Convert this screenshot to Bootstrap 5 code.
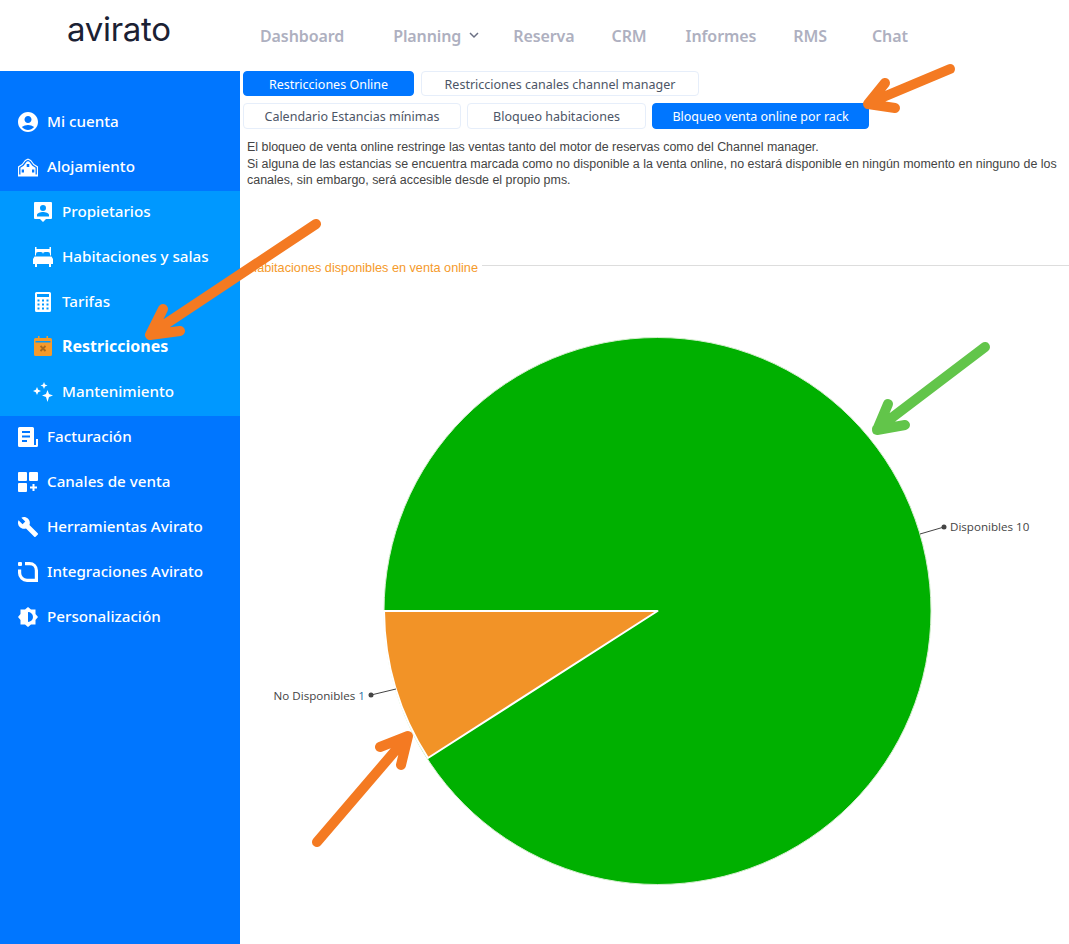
<!DOCTYPE html>
<html lang="es">
<head>
    <meta charset="utf-8">
    <title>Avirato - Restricciones</title>
    <link href="https://cdn.jsdelivr.net/npm/bootstrap@5.3.0/dist/css/bootstrap.min.css" rel="stylesheet">
    <style>
        html, body { height: 944px; overflow: hidden; }
        body { font-family: "Noto Sans", "Open Sans", sans-serif; background: #fff; position: relative; }
        .top-bar { height: 71px; }
        .logo-box { width: 240px; }
        .logo-word { font-family: Inter, sans-serif; font-size: 33px; font-weight: 400; color: #1b2133; letter-spacing: -.3px; line-height: 1; margin-left: 67px; margin-top: -12px; }
        .top-link { font-size: 16px; font-weight: 600; color: #aeb0c0; text-decoration: none; letter-spacing: -.1px; }
        .side-bar { width: 240px; height: 873px; background: #0076ff; padding-top: 30px; flex: none; }
        .side-item { height: 41px; margin-bottom: 4px; padding-left: 18px; gap: 9px; color: #fff; font-size: 15.2px; font-weight: 500; text-decoration: none; }
        .side-item svg { width: 20px; height: 20px; flex: none; }
        .side-sub { background: #0098ff; display: flow-root; }
        .side-sub .side-item { padding-left: 33px; }
        .side-sub .is-on { font-weight: 700; font-size: 16px; position: relative; top: -1px; }
        .main-area { width: 829px; flex: none; }
        .tab-btn { height: 25px; border: 1px solid #e6eefa; border-radius: 4px; background: #fff; color: #4c5566; font-size: 12.5px; padding: 3px 0 0; line-height: 1; }
        .tab-btn.is-on { background: #0076ff; border-color: #0076ff; color: #fff; }
        .tab-row { gap: 6px; margin-left: 3px; margin-bottom: 7px; }
        .w-a { width: 171px; } .w-b { width: 278px; margin-left: 1px; } .w-c { width: 218px; height: 26px; } .w-d { width: 179px; height: 26px; } .w-e { width: 217px; height: 26px; }
        .info-text { font-family: "Liberation Sans", Arial, sans-serif; font-size: 12.45px; line-height: 16.5px; color: #444; margin: 10px 5px 0 7px; }
        .legend-row { margin-top: 70px; height: 14px; }
        .legend-txt { font-family: "Liberation Sans", Arial, sans-serif; font-size: 12.7px; color: #f59a2b; background: #fff; padding: 0 4px 0 8px; line-height: 14px; position: relative; top: 2px; }
        .legend-line { border-top: 1px solid #ddd; flex: 1; }
        .pie-svg { display: block; width: 829px; height: 671px; }
        .pie-svg text { font-family: "Open Sans", sans-serif; font-size: 11.6px; fill: #444; }
        .arrow-layer { position: absolute; left: 0; top: 0; width: 1069px; height: 944px; pointer-events: none; }
    </style>
</head>
<body>
    <header class="top-bar d-flex align-items-center">
        <div class="logo-box"><div class="logo-word">avirato</div></div>
        <nav class="d-flex align-items-center">
            <a class="top-link" style="margin-left:20px" href="#">Dashboard</a>
            <a class="top-link d-flex align-items-center" style="margin-left:49px" href="#">Planning
                <svg class="ms-2" width="10" height="7" viewBox="0 0 10 7"><path d="M1 1l4 4 4-4" fill="none" stroke="#6b7084" stroke-width="1.5"/></svg>
            </a>
            <a class="top-link" style="margin-left:34px" href="#">Reserva</a>
            <a class="top-link" style="margin-left:37px" href="#">CRM</a>
            <a class="top-link" style="margin-left:39px" href="#">Informes</a>
            <a class="top-link" style="margin-left:37px" href="#">RMS</a>
            <a class="top-link" style="margin-left:45px" href="#">Chat</a>
        </nav>
    </header>

    <div class="d-flex">
        <aside class="side-bar">
            <a class="side-item d-flex align-items-center" href="#">
                <svg viewBox="2 2 20 20"><path fill="#fff" d="M12 2C6.48 2 2 6.48 2 12s4.48 10 10 10 10-4.48 10-10S17.52 2 12 2zm0 4c1.93 0 3.5 1.57 3.5 3.5S13.93 13 12 13s-3.5-1.57-3.5-3.5S10.07 6 12 6zm0 14c-2.03 0-4.43-.82-6.14-2.88C7.55 15.8 9.68 15 12 15s4.45.8 6.14 2.12C16.43 19.18 14.03 20 12 20z"/></svg>
                Mi cuenta
            </a>
            <a class="side-item d-flex align-items-center" href="#">
                <svg viewBox="0 0 20 20"><path fill="#fff" d="M0 19.500V9.500L4 7l3-4 3-1.500L13 3l3 4 4 2.500v10z"/><path fill="none" stroke="#0076ff" stroke-width="1.300" d="M1.800 17.500v-7L5.200 8.200 8 4.500 10 3.500l2 1 2.800 3.700 3.400 2.300v7"/><path fill="#0076ff" d="M8.700 7h2.600v3H8.700zM3.700 12.500H6v3H3.700zM14 12.500h2.300v3H14z"/></svg>
                Alojamiento
            </a>
            <div class="side-sub">
                <a class="side-item d-flex align-items-center" href="#">
                    <svg viewBox="0 0 20 20"><path fill="#fff" fill-rule="evenodd" d="M2 0h16a1 1 0 0 1 1 1v15a1 1 0 0 1-1 1h-5l-3 3-3-3H2a1 1 0 0 1-1-1V1a1 1 0 0 1 1-1zM10 3a3 3 0 1 0 0 6 3 3 0 0 0 0-6zM4 14.500h12V13c0-1.800-3.500-3-6-3s-6 1.200-6 3z"/></svg>
                    Propietarios
                </a>
                <a class="side-item d-flex align-items-center" href="#">
                    <svg viewBox="0 0 20 20"><path fill="#fff" d="M2 0h1.500v2h13V0H18v8.500h-1V7a2 2 0 0 0-2-2h-3a2 2 0 0 0-2 2 2 2 0 0 0-2-2H5a2 2 0 0 0-2 2v1.500H2z"/><path fill="#fff" d="M1.500 9.500h17L20 12v5h-2v3h-2v-3H4v3H2v-3H0v-5z"/></svg>
                    Habitaciones y salas
                </a>
                <a class="side-item d-flex align-items-center" href="#">
                    <svg viewBox="0 0 20 20"><path fill="#fff" fill-rule="evenodd" d="M3.500 0h13A1.500 1.500 0 0 1 18 1.500v17a1.500 1.500 0 0 1-1.500 1.500h-13A1.500 1.500 0 0 1 2 18.500v-17A1.500 1.500 0 0 1 3.500 0zM4 2v3h12V2zM4.500 7.500v2h2v-2zM9 7.500v2h2v-2zM13.500 7.500v2h2v-2zM4.500 11.500v2h2v-2zM9 11.500v2h2v-2zM13.500 11.500v2h2v-2zM4.500 15.500v2h2v-2zM9 15.500v2h2v-2zM13.500 15.500v2h2v-2z"/></svg>
                    Tarifas
                </a>
                <a class="side-item is-on d-flex align-items-center" href="#">
                    <svg viewBox="0 0 20 20"><path fill="#f59a2b" fill-rule="evenodd" d="M5 0h1.500v2h7V0H15v2h2.500A1.500 1.500 0 0 1 19 3.500v15a1.500 1.500 0 0 1-1.500 1.500h-15A1.500 1.500 0 0 1 1 18.500v-15A1.500 1.500 0 0 1 2.500 2H5zM2.500 5v1.500h15V5z"/><path d="M7.500 10l5 5M12.500 10l-5 5" stroke="#a86a1e" stroke-width="1.800"/></svg>
                    Restricciones
                </a>
                <a class="side-item d-flex align-items-center" href="#">
                    <svg viewBox="0 0 20 20"><path fill="#fff" d="M11 0l1 2.500L14.500 3.500 12 4.500 11 7 10 4.500 7.500 3.500 10 2.500zM4 5l1.200 2.800L8 9 5.200 10.200 4 13 2.800 10.200 0 9l2.800-1.200zM14.500 8l1.500 4 4 1.500-4 1.500-1.500 5-1.500-5-4-1.500 4-1.500z"/></svg>
                    Mantenimiento
                </a>
            </div>
            <a class="side-item d-flex align-items-center" href="#">
                <svg viewBox="0 0 20 20"><path fill="#fff" fill-rule="evenodd" d="M1.500 0h13A1.500 1.500 0 0 1 16 1.500V18h2v-6h2v6.500a1.500 1.500 0 0 1-1.500 1.500h-17A1.500 1.500 0 0 1 0 18.500v-17A1.500 1.500 0 0 1 1.500 0zM4 4v2h8V4zM4 8.500v2h8v-2zM4 13v2h5v-2z"/></svg>
                Facturación
            </a>
            <a class="side-item d-flex align-items-center" href="#">
                <svg viewBox="0 0 20 20"><rect fill="#fff" width="9" height="9" rx="1"/><rect fill="#fff" x="11" width="9" height="9" rx="1"/><rect fill="#fff" y="11" width="9" height="9" rx="1"/><path fill="#fff" d="M14.500 12h2v2.500H19v2h-2.500V19h-2v-2.500H12v-2h2.500z"/></svg>
                Canales de venta
            </a>
            <a class="side-item d-flex align-items-center" href="#">
                <svg viewBox="1 1 22 22"><path fill="#fff" d="M22.700 19l-9.100-9.100c.9-2.300.4-5-1.500-6.900-2-2-5-2.400-7.400-1.300L9 6 6 9 1.600 4.700C.4 7.100.9 10.100 2.900 12.100c1.900 1.900 4.600 2.400 6.900 1.500l9.100 9.100c.4.400 1 .4 1.400 0l2.300-2.300c.5-.4.5-1.100.1-1.400z"/></svg>
                Herramientas Avirato
            </a>
            <a class="side-item d-flex align-items-center" href="#">
                <svg viewBox="0 0 20 20"><rect fill="#fff" x="0" y="0" width="4" height="4" rx="1"/><path fill="none" stroke="#fff" stroke-width="3.200" d="M7 1.600h4.500c4 0 6.900 3 6.900 7v9.800H9a7.400 7.400 0 0 1-7.400-7.400V7.500"/></svg>
                Integraciones Avirato
            </a>
            <a class="side-item d-flex align-items-center" href="#">
                <svg viewBox="0 0 20 20"><path fill="#fff" fill-rule="evenodd" d="M10 0l3 2.500h4.500V7l2.500 3-2.500 3v4.500H13L10 20l-3-2.500H2.500V13L0 10l2.500-3V2.500H7zM10 5v10a5 5 0 0 0 0-10z"/></svg>
                Personalización
            </a>
        </aside>

        <main class="main-area">
            <div class="d-flex tab-row">
                <button class="tab-btn is-on w-a">Restricciones Online</button>
                <button class="tab-btn w-b">Restricciones canales channel manager</button>
            </div>
            <div class="d-flex tab-row">
                <button class="tab-btn w-c">Calendario Estancias mínimas</button>
                <button class="tab-btn w-d">Bloqueo habitaciones</button>
                <button class="tab-btn is-on w-e">Bloqueo venta online por rack</button>
            </div>
            <p class="info-text">El bloqueo de venta online restringe las ventas tanto del motor de reservas como del Channel manager.<br>Si alguna de las estancias se encuentra marcada como no disponible a la venta online, no estará disponible en ningún momento en ninguno de los canales, sin embargo, será accesible desde el propio pms.</p>
            <div class="legend-row d-flex align-items-center">
                <span class="legend-txt">Habitaciones disponibles en venta online</span>
                <span class="legend-line"></span>
            </div>
            <!-- viewBox starts at page x 240, y 273 -->
            <svg class="pie-svg" viewBox="240 273 829 671">
                <circle cx="657.500" cy="611" r="273.500" fill="#00b000" stroke="#d6efd0" stroke-width="1"/>
                <path d="M657.500 611 L384 611 A273.500 273.500 0 0 0 428 758 Z" fill="#f29327" stroke="#fff" stroke-width="2" stroke-linejoin="round"/>
                <path d="M920 534L944 527" stroke="#444" fill="none"/>
                <circle cx="944" cy="527" r="2.500" fill="#444"/>
                <text x="950" y="531">Disponibles 10</text>
                <path d="M396 689L371 695" stroke="#444" fill="none"/>
                <circle cx="371" cy="695" r="2.500" fill="#444"/>
                <text x="365" y="700" text-anchor="end">No Disponibles <tspan style="fill:#2f6fa5">1</tspan></text>
            </svg>
        </main>
    </div>

    <!-- annotation arrows lying over the page -->
    <svg class="arrow-layer" viewBox="0 0 1069 944" fill="none" stroke-linecap="round" stroke-linejoin="round">
        <g stroke="#f47a22" stroke-width="10">
            <path d="M950 69L869 103M885 83L868 104 895 108"/>
            <path d="M316 224L152 333M163 309L150 335 180 331"/>
            <path d="M317 842L407 737M380 747L408 736 401 765"/>
        </g>
        <path d="M985 347L877 429M888 404L877 430 905 425" stroke="#62c54a" stroke-width="10"/>
    </svg>

    <script src="https://cdn.jsdelivr.net/npm/bootstrap@5.3.0/dist/js/bootstrap.bundle.min.js"></script>
</body>
</html>
